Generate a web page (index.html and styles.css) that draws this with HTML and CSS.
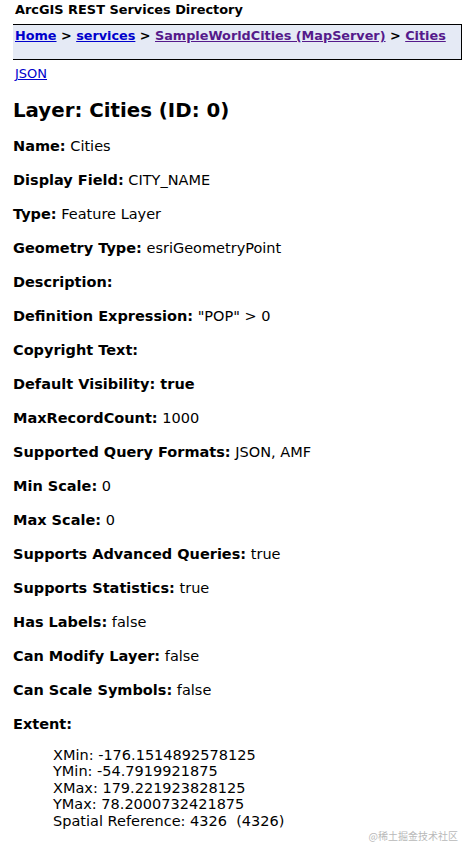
FILE: index.html
```html
<!DOCTYPE html>
<html>
<head>
<meta charset="utf-8">
<link rel="stylesheet" href="styles.css">
</head>
<body>
<div class="title">ArcGIS REST Services Directory</div>
<div class="crumbs">
  <a href="#" class="link">Home</a> &gt; <a href="#" class="link">services</a> &gt; <a href="#" class="visited">SampleWorldCities (MapServer)</a> &gt; <a href="#" class="visited">Cities</a>
</div>
<div class="formats"><a href="#" class="link">JSON</a></div>
<h2 class="heading">Layer: Cities (ID: 0)</h2>
<div class="props">
  <p><b>Name:</b> Cities</p>
  <p><b>Display Field:</b> CITY_NAME</p>
  <p><b>Type:</b> Feature Layer</p>
  <p><b>Geometry Type:</b> esriGeometryPoint</p>
  <p><b>Description:</b> </p>
  <p><b>Definition Expression:</b> "POP" &gt; 0</p>
  <p><b>Copyright Text:</b> </p>
  <p><b>Default Visibility: true</b></p>
  <p><b>MaxRecordCount:</b> 1000</p>
  <p><b>Supported Query Formats:</b> JSON, AMF</p>
  <p><b>Min Scale:</b> 0</p>
  <p><b>Max Scale:</b> 0</p>
  <p><b>Supports Advanced Queries:</b> true</p>
  <p><b>Supports Statistics:</b> true</p>
  <p><b>Has Labels:</b> false</p>
  <p><b>Can Modify Layer:</b> false</p>
  <p><b>Can Scale Symbols:</b> false</p>
  <p><b>Extent:</b></p>
</div>
<div class="extent">
  <div>XMin: -176.1514892578125</div>
  <div>YMin: -54.7919921875</div>
  <div>XMax: 179.221923828125</div>
  <div>YMax: 78.2000732421875</div>
  <div>Spatial Reference: 4326&nbsp; (4326)</div>
</div>
<div class="watermark">@稀土掘金技术社区</div>
</body>
</html>
```
FILE: styles.css
```css
html, body {
  margin: 0;
  padding: 0;
  background: #fff;
}
body {
  font-family: "DejaVu Sans", Verdana, sans-serif;
  font-size: 14.5px;
  color: #000;
  position: relative;
  height: 846px;
  overflow: hidden;
}
.title {
  font-weight: bold;
  font-size: 12.9px;
  line-height: 16px;
  padding: 2px 0 0 15px;
  height: 22px;
}
.crumbs {
  margin-left: 13px;
  background: #e5eaf5;
  border-top: 1px solid #000;
  border-bottom: 1px solid #000;
  border-right: 1px solid #000;
  padding: 3px 0 0 2px;
  box-sizing: border-box;
  height: 36px;
  font-weight: bold;
  font-size: 12.8px;
  line-height: 16px;
}
.link { color: #0000cc; }
.visited { color: #551a8b; }
.formats {
  margin: 6px 0 0 15px;
  font-size: 13px;
  line-height: 15px;
}
.heading {
  margin: 18px 0 0 13px;
  font-size: 19.8px;
  line-height: 24px;
}
.props {
  margin: 15px 0 0 13px;
  display: flex;
  flex-direction: column;
  gap: 17px;
}
.props p {
  margin: 0;
  line-height: 17px;
}
.extent {
  margin: 14px 0 0 53px;
  line-height: 16.4px;
}
.watermark {
  position: absolute;
  right: 4px;
  bottom: 3px;
  font-family: "Noto Sans CJK SC", sans-serif;
  font-size: 10px;
  color: #b9b9b9;
}
```
